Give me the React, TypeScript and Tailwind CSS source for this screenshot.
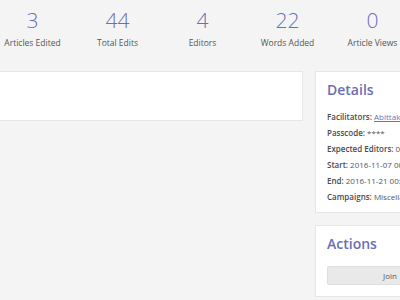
const STATS = [
  { value: "3", label: "Articles Edited" },
  { value: "44", label: "Total Edits" },
  { value: "4", label: "Editors" },
  { value: "22", label: "Words Added" },
  { value: "0", label: "Article Views" },
];

function Stat({ value, label }: { value: string; label: string }) {
  return (
    <div className="w-[85px] shrink-0 flex flex-col items-center">
      <div className="text-[21px] font-light leading-[24px] text-[#6a6fb3]">{value}</div>
      <div className="mt-[5px] text-[8.5px] leading-[12px] text-[#555]">{label}</div>
    </div>
  );
}

function DetailRow({ label, children }: { label: string; children: React.ReactNode }) {
  return (
    <p className="text-[8px] leading-[16px] text-[#555] whitespace-nowrap">
      <span className="font-semibold text-[#4a4a4a]">{label}</span> {children}
    </p>
  );
}

export default function App() {
  return (
    <div
      className="w-[400px] h-[300px] overflow-hidden bg-[#f4f4f4]"
      style={{ fontFamily: '"Open Sans", "Liberation Sans", sans-serif' }}
    >
      <div className="flex ml-[-10px] pt-[8px]">
        {STATS.map((s) => (
          <Stat key={s.label} value={s.value} label={s.label} />
        ))}
      </div>

      <div className="flex gap-[12px] ml-[-10px] mt-[22px] items-start">
        <div className="w-[313px] shrink-0 h-[50px] bg-white border border-[#e6e6e6]" />

        <div className="w-[150px] shrink-0 flex flex-col gap-[12px]">
          <div className="bg-white border border-[#e6e6e6] px-[11px] pt-[7px] pb-[7px]">
            <h3 className="text-[14px] font-semibold leading-[22px] text-[#6a6fb3]">Details</h3>
            <div className="mt-[8px]">
              <DetailRow label="Facilitators:">
                <span className="text-[#6a6fb3] underline">Abittaker</span>
              </DetailRow>
              <DetailRow label="Passcode:">****</DetailRow>
              <DetailRow label="Expected Editors:">0</DetailRow>
              <DetailRow label="Start:">2016-11-07 00:00</DetailRow>
              <DetailRow label="End:">2016-11-21 00:00</DetailRow>
              <DetailRow label="Campaigns:">Miscellanea</DetailRow>
            </div>
          </div>

          <div className="bg-white border border-[#e6e6e6] px-[11px] pt-[7px] pb-[11px]">
            <h3 className="text-[14px] font-semibold leading-[22px] text-[#6a6fb3]">Actions</h3>
            <button className="mt-[11px] w-full h-[19px] bg-[#e9e9e9] border border-[#dedede] rounded-[2px] text-[8px] text-[#555]">
              Join
            </button>
          </div>
        </div>
      </div>
    </div>
  );
}
